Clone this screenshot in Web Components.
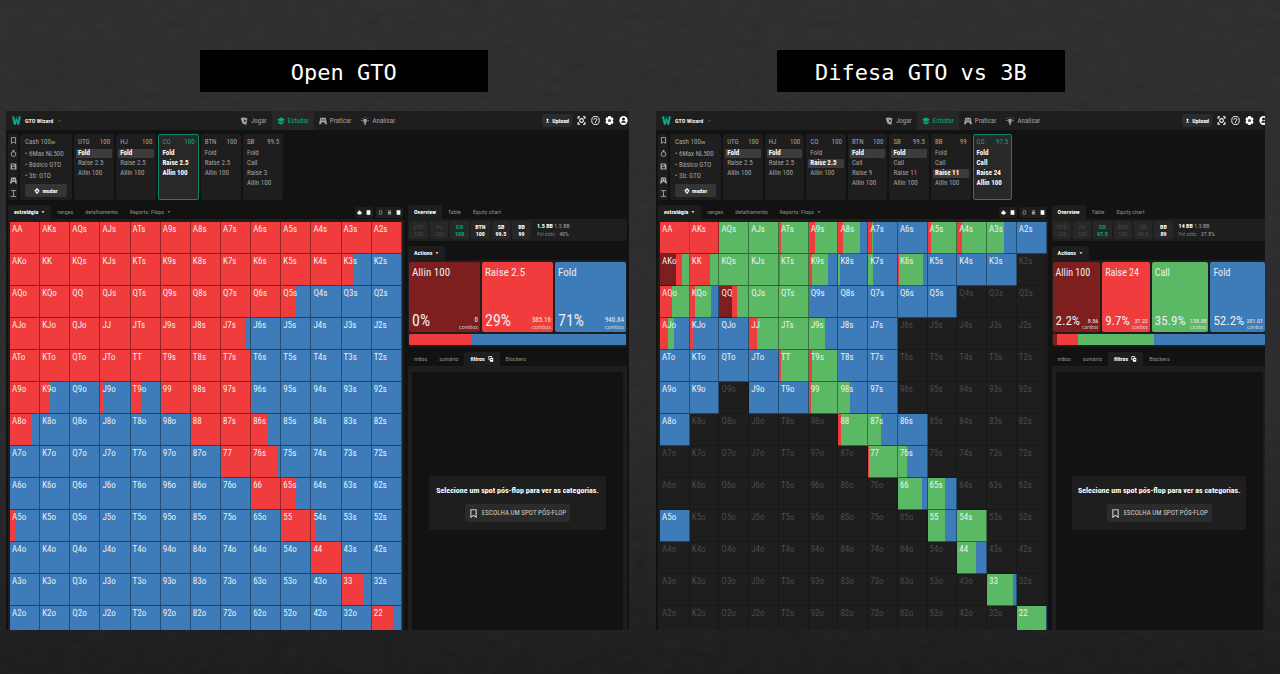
<!DOCTYPE html>
<html lang="pt">
<head>
<meta charset="utf-8">
<title>Open GTO / Difesa GTO vs 3B</title>
<style>
  :root {
    --green: #5bb966;
    --red: #f03c3c;
    --dark-red: #7d1f1f;
    --blue: #3d7cb8;
    --teal: #06a882;
    --panel: #1e1e1e;
    --ground: #121212;
    --xs: 6px;
    --sm: 7px;
    --md: 9px;
    --lg: 11px;
    --xl: 16px;
  }
  body {
    margin: 0;
    background: #29292b;
    color: #fff;
    font-family: "Roboto Condensed", "Liberation Sans Narrow", Roboto, sans-serif;
  }
</style>
</head>
<body>
<slide-page>
  <slide-title slot="title">Open GTO</slide-title>
  <slide-title slot="title">Difesa GTO vs 3B</slide-title>
  <gto-board slot="board" data-range="open"></gto-board>
  <gto-board slot="board" data-range="defense" class="cut"></gto-board>
</slide-page>

<script>
// Icon shapes, all on a 24x24 grid
const ICONS = {
  logo: '<path fill="#06b08a" d="M0 1h6l2 14 2-9h4l2 9 2-14h6l-5 22h-5l-2-9-2 9H5z"/><path fill="#056f58" d="M9 1h6l-3 7z"/>',
  chevron: '<path fill="none" stroke="currentColor" stroke-width="3" d="M3 8l9 9 9-9"/>',
  caret: '<path d="M3 7h18l-9 11z"/>',
  cards: '<path d="M2 4l7-3v17l-2 1zM10 1l12 3-3 19-11-3z"/><path fill="#1e1e1e" d="M15 7l3 5-4 4-2-5z"/>',
  hat: '<path d="M12 1L0 8l12 7 12-7zM4 12v6l8 5 8-5v-6l-8 5z"/>',
  gamepad: '<path d="M4 2h16l4 20h-5l-4-6H9l-4 6H0z"/><path fill="#1e1e1e" d="M7 7h3v4H7zM14 7h3v4h-3z"/>',
  bulb: '<path d="M7 6h10v9l-3 3v6h-4v-6l-3-3zM11 0h2v4h-2zM0 9h5v2H0zM19 9h5v2h-5zM2 2l4 3-1 1-4-3zM22 2l-4 3 1 1 4-3z"/>',
  upload: '<path d="M12 2l7 8h-4v6H9v-6H5zM4 18h16v4H4z"/>',
  scan: '<path fill="none" stroke="currentColor" stroke-width="3" d="M3 8V2h5M16 2h5v6M21 16v6h-5M8 22H3v-6"/><circle cx="12" cy="12" r="5" fill="none" stroke="currentColor" stroke-width="3"/>',
  help: '<ellipse cx="12" cy="12" rx="10" ry="11" fill="none" stroke="currentColor" stroke-width="2.5"/><path fill="none" stroke="currentColor" stroke-width="2.5" d="M8 10c0-5 8-5 8 0 0 3-4 2-4 5M12 16v3"/>',
  gear: '<path d="M9 0h6l1 4 4-1 3 6-3 3 3 3-3 6-4-1-1 4H9l-1-4-4 1-3-6 3-3-3-3 3-6 4 1z"/><circle cx="12" cy="12" r="4" fill="#444"/>',
  user: '<ellipse cx="12" cy="12" rx="11" ry="12"/><circle cx="12" cy="8" r="4" fill="#1e1e1e"/><path fill="#1e1e1e" d="M5 18c2-6 12-6 14 0z"/>',
  bookmark: '<path fill="none" stroke="currentColor" stroke-width="3" d="M5 2h14v20l-7-5-7 5z"/>',
  chip: '<circle cx="12" cy="14" r="8" fill="none" stroke="currentColor" stroke-width="3"/><path d="M9 0h6v6H9z"/>',
  save: '<path d="M2 2h16l4 4v16H2z"/><path fill="#1e1e1e" d="M6 5h9v4H6zM7 13h10v6H7z"/>',
  height: '<path fill="none" stroke="currentColor" stroke-width="3" d="M3 2h18M3 22h18M12 3v18"/>',
  swap: '<path d="M12 0l9 9H3zM12 24l9-9H3zM3 7h6v10H3zM15 7h6v10h-6z"/>',
  spade: '<path d="M12 1l10 9v8l-6 4H8l-6-4v-8z"/><path fill="#1e1e1e" d="M7 7h3v3H7zM14 7h3v3h-3z"/>',
  block: '<path d="M3 1h18v22H3z"/>',
  outline: '<path fill="none" stroke="#888" stroke-width="4" d="M6 4h12v16H6z"/>',
  lines: '<path fill="#aaa" d="M4 2h16v5H4zM4 9h16v5H4zM4 16h16v5H4z"/>',
  copy: '<path fill="none" stroke="currentColor" stroke-width="3" d="M3 2h12v13H3z"/><path d="M8 8h13v15H8z"/><path fill="#1e1e1e" d="M11 13h7v3h-7z"/>'
};

class GtoIcon extends HTMLElement {
  constructor() {
    super();
    this.attachShadow({ mode: "open" });
  }
  connectedCallback() {
    this.shadowRoot.innerHTML = `
      <style>
        :host { display: inline-block; flex: none; width: var(--icon, 8px); height: var(--icon, 8px); }
        svg { display: block; width: 100%; height: 100%; fill: currentColor; }
      </style>
      <svg viewBox="0 0 24 24" aria-hidden="true">${ICONS[this.getAttribute("name")]}</svg>`;
  }
}
customElements.define("gto-icon", GtoIcon);

class SlidePage extends HTMLElement {
  constructor() {
    super();
    this.attachShadow({ mode: "open" });
    this.shadowRoot.innerHTML = `
      <style>
        :host {
          display: flex; flex-direction: column; box-sizing: border-box;
          position: relative; height: 100vh; padding: 50px 0 44px;
          background: linear-gradient(#2b2b2d, #28282a 60%, #19191b);
        }
        /* slate grain behind everything */
        .grain { position: absolute; inset: 0; width: 100%; height: 100%; opacity: .04; }
        .titles, .boards { position: relative; display: grid; }
        .titles { grid-template-columns: 1fr 1fr; column-gap: 33.4%; padding: 0 16.8% 0 15.6%; }
        .boards {
          flex: 1; min-height: 0; margin-top: 19px; padding: 0 15px 0 6px;
          grid-template-columns: 623fr 609fr; grid-template-rows: 100%; column-gap: 27px;
        }
      </style>
      <svg class="grain" aria-hidden="true">
        <filter id="slate">
          <feTurbulence type="fractalNoise" baseFrequency=".06 .1" numOctaves="4" seed="3"/>
          <feColorMatrix values=".6 .4 0 0 -.1  .6 .4 0 0 -.1  .6 .4 0 0 -.1  0 0 0 0 1"/>
        </filter>
        <rect width="100%" height="100%" filter="url(#slate)"/>
      </svg>
      <div class="titles"><slot name="title"></slot></div>
      <div class="boards"><slot name="board"></slot></div>`;
  }
}
customElements.define("slide-page", SlidePage);

class SlideTitle extends HTMLElement {
  constructor() {
    super();
    this.attachShadow({ mode: "open" });
    this.shadowRoot.innerHTML = `
      <style>
        :host { display: block; background: #000; border-radius: 1px; }
        h2 {
          margin: 0; padding-top: 4px; text-align: center; color: #fff;
          font: 400 22px/38px "DejaVu Sans Mono", monospace;
        }
      </style>
      <h2><slot></slot></h2>`;
  }
}
customElements.define("slide-title", SlideTitle);

// One position with the actions it can take
class SpotCard extends HTMLElement {
  constructor() {
    super();
    this.attachShadow({ mode: "open" });
  }
  set spot([position, stack, actions, picked]) {
    const active = picked === "now";
    this.shadowRoot.innerHTML = `
      <style>
        :host {
          display: block; box-sizing: border-box; width: 6.5%; padding: 3px 1px 0;
          border: 1px solid var(--panel); border-radius: 2px; background: var(--panel); color: #a2a2a2;
        }
        :host(.active) { border-color: #07876b; background: #282828; color: #fff; }
        header { display: flex; justify-content: space-between; padding: 0 2px; margin-bottom: 3px; font-size: var(--sm); line-height: 8px; }
        :host(.active) header { color: var(--teal); }
        button {
          display: block; width: 100%; margin-bottom: 1px; padding: 0 2px; border: 0; border-radius: 1px;
          background: none; color: inherit; font-family: inherit; font-size: var(--sm); line-height: 9px;
          text-align: left; white-space: nowrap;
        }
        :host(.active) button { font-weight: 700; }
        .picked { background: #3c3c3c; color: #fff; font-weight: 700; }
      </style>
      <header><span>${position}</span><span>${stack}</span></header>
      ${actions.map((a) => `<button class="${a === picked ? "picked" : ""}">${a}</button>`).join("")}`;
    this.classList.toggle("active", active);
  }
}
customElements.define("spot-card", SpotCard);

// 13x13 starting hands, each cell painted by how often each action is used
const RANKS = "AKQJT98765432";
const COLORS = { a: "var(--dark-red)", r: "var(--red)", c: "var(--green)", f: "var(--blue)" };

class HandMatrix extends HTMLElement {
  constructor() {
    super();
    this.attachShadow({ mode: "open" });
  }
  set rows(rows) {
    const body = rows.map((row, i) => `<tr>${row.split(" ").map((mix, j) => this.#cell(mix, i, j)).join("")}</tr>`);
    this.shadowRoot.innerHTML = `
      <style>
        :host { display: block; }
        table { width: 100%; table-layout: fixed; border-collapse: separate; border-spacing: 0; }
        td {
          box-sizing: border-box; height: 32px; padding: 2px 0 0 2px; vertical-align: top;
          border-right: 1px solid rgba(0,0,0,.38); border-bottom: 1px solid rgba(0,0,0,.45);
          background-origin: border-box; font-size: var(--md); line-height: 11px; color: #eee;
        }
        td.out { color: #4a4a4a; border-color: #171717; }
      </style>
      <table aria-label="Mãos">${body.join("")}</table>`;
  }
  #cell(mix, i, j) {
    const hand = i === j ? RANKS[i] + RANKS[i] : i < j ? RANKS[i] + RANKS[j] + "s" : RANKS[j] + RANKS[i] + "o";
    if (mix === "-") return `<td class="out">${hand}</td>`;
    let at = 0;
    const stops = mix.match(/[arcf]\d*/g).map((part) => {
      const from = at;
      at = part[1] ? at + Number(part.slice(1)) : 100;
      return `${COLORS[part[0]]} ${from}% ${at}%`;
    });
    return `<td style="background-image:linear-gradient(90deg,${stops.join(",")})">${hand}</td>`;
  }
}
customElements.define("hand-matrix", HandMatrix);

class ActionCard extends HTMLElement {
  constructor() {
    super();
    this.attachShadow({ mode: "open" });
  }
  set action([kind, name, share, combos]) {
    this.shadowRoot.innerHTML = `
      <style>
        :host {
          display: flex; flex-direction: column; justify-content: space-between; box-sizing: border-box;
          min-width: 0; height: 70px; padding: 3px 2px 2px 3px; border-radius: 2px; background: ${COLORS[kind]};
          color: #eee; white-space: nowrap;
        }
        .name { font-size: var(--name, var(--lg)); line-height: 16px; }
        .row { display: flex; justify-content: space-between; align-items: flex-end; }
        .share { font-size: var(--share, var(--xl)); line-height: 18px; }
        .combos { font-size: var(--combos, var(--sm)); line-height: 7px; text-align: right; }
        small { display: block; font-size: var(--unit, var(--xs)); line-height: 6px; opacity: .7; }
      </style>
      <span class="name">${name}</span>
      <div class="row"><span class="share">${share}</span><span class="combos">${combos}<small>combos</small></span></div>`;
  }
}
customElements.define("action-card", ActionCard);

class TabStrip extends HTMLElement {
  constructor() {
    super();
    this.attachShadow({ mode: "open" });
    this.shadowRoot.innerHTML = `
      <style>
        :host { display: flex; height: 14px; font-size: var(--xs); }
        ::slotted(button) {
          display: flex; align-items: center; gap: 3px; padding: 0 6px; border: 0; border-radius: 3px 3px 0 0;
          background: none; color: #8c8c8c; line-height: 14px; white-space: nowrap;
          --icon: 4px;
        }
        ::slotted(button.on) { background: var(--panel); color: #fff; font-weight: 700; }
        ::slotted(button.wide) { --icon: 6px; }
      </style>
      <slot></slot>`;
  }
}
customElements.define("tab-strip", TabStrip);

const FOLD3 = ["Fold", "Raise 2.5", "Allin 100"];
const BOARDS = {
  open: {
    spots: [
      ["UTG", "100", FOLD3, "Fold"],
      ["HJ", "100", FOLD3, "Fold"],
      ["CO", "100", FOLD3, "now"],
      ["BTN", "100", FOLD3],
      ["SB", "99.5", ["Fold", "Call", "Raise 3", "Allin 100"]]
    ],
    seats: [["UTG", 100, "off"], ["HJ", 100, "off"], ["CO", 100, "hero"], ["BTN", 100], ["SB", 99.5], ["BB", 99]],
    pot: ["1.5 BB", "1.5 BB", "40%"],
    columns: "1fr 1fr 1fr",
    actions: [["a", "Allin 100", "0%", "0"], ["r", "Raise 2.5", "29%", "385.16"], ["f", "Fold", "71%", "940.84"]],
    bar: [["r", 29], ["f", 71]],
    rows: [
      "r r r r r r r r r r r r r",
      "r r r r r r r r r r r r40f f",
      "r r r r r r r r r r48f f f f",
      "r r r r r r r r80f f f f f f",
      "r r r r r r r r f f f f f",
      "r r32f f r14f r32f r r r f f f f f",
      "r72f f f f f f r r r55f f f f f",
      "f f f f f f f r r86f f f f f",
      "f f f f f f f f r r48f f f f",
      "r18f f f f f f f f f r r15f f f",
      "f f f f f f f f f f r f f",
      "f f f f f f f f f f f r72f f",
      "f f f f f f f f f f f f r70f"
    ]
  },
  defense: {
    spots: [
      ["UTG", "100", FOLD3, "Fold"],
      ["HJ", "100", FOLD3, "Fold"],
      ["CO", "100", FOLD3, "Raise 2.5"],
      ["BTN", "100", ["Fold", "Call", "Raise 9", "Allin 100"], "Fold"],
      ["SB", "99.5", ["Fold", "Call", "Raise 11", "Allin 100"], "Fold"],
      ["BB", "99", ["Fold", "Call", "Raise 11", "Allin 100"], "Raise 11"],
      ["CO", "97.5", ["Fold", "Call", "Raise 24", "Allin 100"], "now"]
    ],
    seats: [["UTG", 100, "off"], ["HJ", 100, "off"], ["CO", 97.5, "hero"], ["BTN", 100, "off"], ["SB", 99.5, "off"], ["BB", 89]],
    pot: ["14 BB", "1.5 BB", "37.8%"],
    columns: "48fr 48fr 57fr 55fr",
    actions: [["a", "Allin 100", "2.2%", "8.56"], ["r", "Raise 24", "9.7%", "37.22"], ["c", "Call", "35.9%", "138.38"], ["f", "Fold", "52.2%", "201.01"]],
    bar: [["a", 2.2], ["r", 9.7], ["c", 35.9], ["f", 52.2]],
    rows: [
      "r97c r c c r6c r22c r18c55f r12c6f f r12c r18c c55f f",
      "a52r22c r68c c c r4c r12c53f c5f c18f r4c78f f f f -",
      "r40c r18c54f a42r18c c c f f f f f - - -",
      "r25c20f r9c2f f r28c c c54f f f - - - - -",
      "f f f f r8c r12c f f - - - - -",
      "f f - f f r8c c40f f - - - - -",
      "f - - - - - r10c c42f f - - - -",
      "- - - - - - - r4c c30f - - - -",
      "- - - - - - - - c80f c60f - - -",
      "f - - - - - - - - c60f c - -",
      "- - - - - - - - - - c62f - -",
      "- - - - - - - - - - - c87f -",
      "- - - - - - - - - - - - c98f"
    ]
  }
};

class GtoBoard extends HTMLElement {
  constructor() {
    super();
    this.attachShadow({ mode: "open" });
  }
  connectedCallback() {
    const data = BOARDS[this.dataset.range];
    const icon = (name) => `<gto-icon name="${name}"></gto-icon>`;
    this.shadowRoot.innerHTML = `
      <style>
        :host { display: block; min-width: 0; overflow: hidden; background: var(--ground); font-size: var(--sm); }
        /* the second board runs a little past its right edge, its action cards stay inside */
        :host(.cut) .app { margin-right: -4px; }
        :host(.cut) .box { margin-right: 1px; }
        :host(.cut) .left .frame { padding-right: 1px; }
        :host(.cut) { --name: 10px; --share: 13px; --combos: 6px; --unit: 5px; }
        .app { display: flex; flex-direction: column; height: 100%; }
        button { font-family: inherit; font-size: inherit; border: 0; }
        .top { display: grid; grid-template-columns: 1fr auto 1fr; height: 19px; background: var(--panel); align-items: center; }
        .brand { display: flex; align-items: center; gap: 4px; padding-left: 6px; font-weight: 700; font-size: var(--xs); color: #eee; --icon: 9px; }
        .brand gto-icon + gto-icon { --icon: 5px; color: #777; }
        nav { display: flex; height: 19px; }
        nav a { display: flex; align-items: center; gap: 3px; padding: 0 5px; color: #a2a2a2; text-decoration: none; font-size: var(--sm); }
        nav a.on { color: var(--teal); background: #272727; }
        .tools { display: flex; justify-content: flex-end; align-items: center; gap: 5px; padding-right: 1px; --icon: 9px; }
        .tools button { padding: 0; background: none; color: #fff; display: flex; }
        .tools .upload { align-items: center; gap: 2px; height: 13px; padding: 0 3px; border-radius: 2px; background: #2b2b2b; font-size: var(--xs); font-weight: 700; --icon: 5px; }
        .spots { display: flex; gap: 2px; height: 66px; padding: 4px 2px 5px; }
        .side { display: flex; flex-direction: column; align-items: center; justify-content: space-around; width: 10px; background: var(--panel); border-radius: 2px; color: #aaa; --icon: 7px; }
        .game { box-sizing: border-box; width: 8.4%; padding: 4px 5px 3px; background: var(--panel); border-radius: 2px; color: #a2a2a2; white-space: nowrap; line-height: 8px; }
        .game ul { margin: 2px 0; padding: 0; list-style: none; line-height: 11px; }
        .game li::before { content: "• "; }
        .game sub { font-size: 4px; vertical-align: baseline; }
        .game button { display: flex; align-items: center; justify-content: center; gap: 2px; width: 100%; height: 13px; padding: 0; border-radius: 2px; background: #353535; color: #fff; font-size: var(--xs); font-weight: 700; --icon: 6px; }
        .main { display: grid; grid-template-columns: 396fr 219fr; grid-template-rows: 100%; column-gap: 4px; flex: 1; min-height: 0; padding: 0 2px; }
        .left, .right { min-width: 0; overflow: hidden; }
        .bar { display: flex; justify-content: space-between; align-items: center; }
        .views { display: flex; gap: 3px; padding-right: 1px; --icon: 5px; }
        .views span { display: flex; gap: 4px; padding: 3px 2px; border-radius: 2px; background: var(--panel); }
        .left .frame { padding: 3px 2px 0; background: var(--panel); border-radius: 0 2px 0 0; }
        .seats { display: flex; gap: 2px; padding: 2px 1px; height: 18px; background: var(--panel); border-radius: 0 2px 2px 2px; }
        .seat { width: 8.6%; background: #272727; border-radius: 2px; text-align: center; line-height: 7px; padding-top: 2px; font-weight: 700; font-size: var(--xs); box-sizing: border-box; }
        .seat.off { color: #474747; font-weight: 400; }
        .seat.hero { color: var(--teal); }
        .pot { padding: 1px 0 0 4px; line-height: 8px; color: #a2a2a2; font-size: var(--xs); }
        .pot b { color: #fff; }
        .pot small { font-size: 5px; color: #777; }
        .pot span { padding-left: 2px; }
        .actions { margin-top: 5px; }
        .box { padding: 2px 1px; background: var(--panel); border-radius: 0 2px 2px 2px; }
        .cards { display: grid; gap: 2px; grid-template-columns: ${data.columns}; }
        .split { display: flex; height: 11px; margin-top: 2px; border-radius: 1px; overflow: hidden; }
        .details { margin-top: 5px; }
        .pane { box-sizing: border-box; height: 264px; padding: 6px 4px 0; background: var(--panel); }
        .inner { display: flex; height: 100%; padding-top: 104px; box-sizing: border-box; align-items: flex-start; justify-content: center; background: var(--ground); }
        .prompt { box-sizing: border-box; width: 84%; height: 54px; padding: 9px 0; background: var(--panel); border-radius: 2px; text-align: center; white-space: nowrap; color: #fff; }
        .prompt p { margin: 0 0 7px; font-size: 8px; font-weight: 700; line-height: 12px; }
        .prompt button { display: inline-flex; align-items: center; gap: 4px; height: 18px; padding: 0 4px; border-radius: 2px; background: #2b2b2b; color: #ccc; font-size: var(--sm); --icon: 9px; }
      </style>
      <div class="app">
        <header class="top">
          <div class="brand">${icon("logo")}GTO Wizard ${icon("chevron")}</div>
          <nav>
            <a href="#jogar">${icon("cards")}Jogar</a>
            <a href="#estudar" class="on">${icon("hat")}Estudar</a>
            <a href="#praticar">${icon("gamepad")}Praticar</a>
            <a href="#analisar">${icon("bulb")}Analisar</a>
          </nav>
          <div class="tools">
            <button class="upload">${icon("upload")}Upload</button>
            <button aria-label="Scan">${icon("scan")}</button>
            <button aria-label="Ajuda">${icon("help")}</button>
            <button aria-label="Ajustes">${icon("gear")}</button>
            <button aria-label="Conta">${icon("user")}</button>
          </div>
        </header>
        <section class="spots">
          <div class="side">${["bookmark", "chip", "save", "gamepad", "height"].map(icon).join("")}</div>
          <div class="game">
            Cash 100<sub>BB</sub>
            <ul><li>6Max NL500</li><li>Básico GTO</li><li>3b: GTO</li></ul>
            <button>${icon("swap")}mudar</button>
          </div>
        </section>
        <div class="main">
          <section class="left">
            <div class="bar">
              <tab-strip>
                <button class="on">estratégia ${icon("caret")}</button>
                <button>ranges</button>
                <button>detalhamento</button>
                <button>Reports: Flops ${icon("caret")}</button>
              </tab-strip>
              <div class="views"><span>${icon("spade")}${icon("block")}</span><span>${icon("outline")}${icon("lines")}${icon("block")}</span></div>
            </div>
            <div class="frame"><hand-matrix></hand-matrix></div>
          </section>
          <section class="right">
            <tab-strip><button class="on">Overview</button><button>Table</button><button>Equity chart</button></tab-strip>
            <div class="seats">
              ${data.seats.map(([name, stack, state = ""]) => `<div class="seat ${state}"><div>${name}</div><div>${stack}</div></div>`).join("")}
              <div class="pot"><b>${data.pot[0]}</b> ${data.pot[1]}<br><small>Pot odds:</small> <span>${data.pot[2]}</span></div>
            </div>
            <div class="actions">
              <tab-strip><button class="on">Actions ${icon("caret")}</button></tab-strip>
              <div class="box">
                <div class="cards"></div>
                <div class="split">${data.bar.map(([kind, share]) => `<div style="flex:${share};background:${COLORS[kind]}"></div>`).join("")}</div>
              </div>
            </div>
            <div class="details">
              <tab-strip><button>mãos</button><button>sumário</button><button class="on wide">filtros ${icon("copy")}</button><button>Blockers</button></tab-strip>
              <div class="pane"><div class="inner">
                <div class="prompt">
                  <p>Selecione um spot pós-flop para ver as categorias.</p>
                  <button>${icon("bookmark")}ESCOLHA UM SPOT PÓS-FLOP</button>
                </div>
              </div></div>
            </div>
          </section>
        </div>
      </div>`;

    const spots = this.shadowRoot.querySelector(".spots");
    data.spots.forEach((spot) => {
      const card = document.createElement("spot-card");
      card.spot = spot;
      spots.appendChild(card);
    });
    const cards = this.shadowRoot.querySelector(".cards");
    data.actions.forEach((action) => {
      const card = document.createElement("action-card");
      card.action = action;
      cards.appendChild(card);
    });
    this.shadowRoot.querySelector("hand-matrix").rows = data.rows;
  }
}
customElements.define("gto-board", GtoBoard);
</script>
</body>
</html>
